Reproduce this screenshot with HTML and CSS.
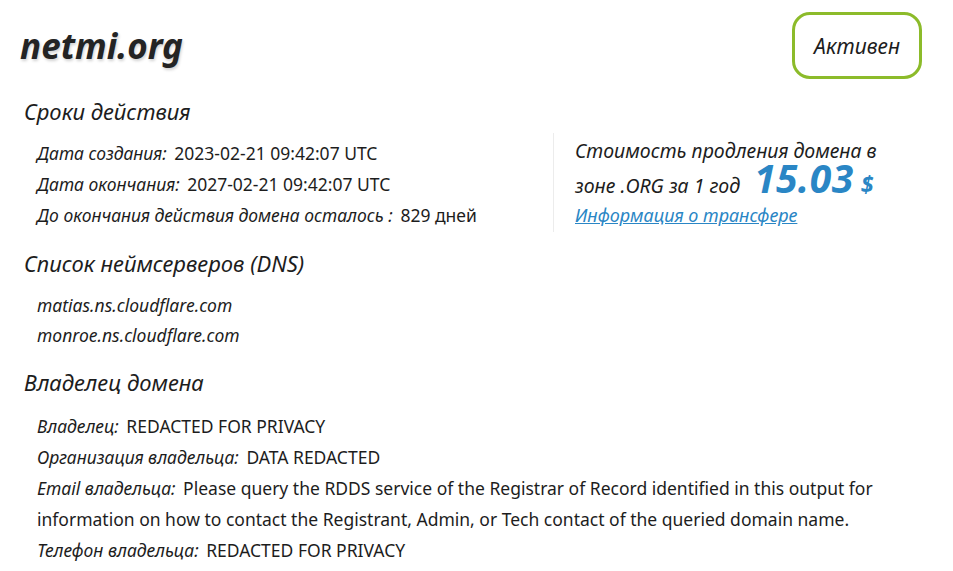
FILE: index.html
```html
<!DOCTYPE html>
<html lang="ru">
<head>
<meta charset="utf-8">
<title>netmi.org</title>
<link rel="stylesheet" href="styles.css">
</head>
<body>
<div class="page">
  <header class="head">
    <h1 class="domain">netmi.org</h1>
    <div class="status">Активен</div>
  </header>

  <section class="block b1">
    <h2 class="sec-title">Сроки действия</h2>
    <div class="dates">
      <div class="rows">
        <div class="row"><span class="lbl">Дата создания:</span> <span class="val">2023-02-21 09:42:07 UTC</span></div>
        <div class="row"><span class="lbl">Дата окончания:</span> <span class="val">2027-02-21 09:42:07 UTC</span></div>
        <div class="row"><span class="lbl">До окончания действия домена осталось :</span> <span class="val">829 дней</span></div>
      </div>
      <div class="price">
        <div class="price-text">Стоимость продления домена в зоне .ORG за 1 год <span class="amount">15.03</span> <span class="cur">$</span></div>
        <a class="transfer" href="#">Информация о трансфере</a>
      </div>
    </div>
  </section>

  <section class="block b2">
    <h2 class="sec-title">Список неймсерверов (DNS)</h2>
    <div class="ns">
      <div class="ns-row">matias.ns.cloudflare.com</div>
      <div class="ns-row">monroe.ns.cloudflare.com</div>
    </div>
  </section>

  <section class="block b3">
    <h2 class="sec-title">Владелец домена</h2>
    <div class="rows owner">
      <div class="row"><span class="lbl">Владелец:</span> <span class="val">REDACTED FOR PRIVACY</span></div>
      <div class="row"><span class="lbl">Организация владельца:</span> <span class="val">DATA REDACTED</span></div>
      <div class="row"><span class="lbl">Email владельца:</span> <span class="val">Please query the RDDS service of the Registrar of Record identified in this output for information on how to contact the Registrant, Admin, or Tech contact of the queried domain name.</span></div>
      <div class="row"><span class="lbl">Телефон владельца:</span> <span class="val">REDACTED FOR PRIVACY</span></div>
    </div>
  </section>
</div>
</body>
</html>
```
FILE: styles.css
```css
* { box-sizing: border-box; }
html, body { margin: 0; padding: 0; background: #fff; }
body {
  font-family: "Noto Sans", "Open Sans", sans-serif;
  color: #1d1d1d;
}
.page {
  width: 953px;
  padding: 12px 31px 0 20px;
}
.head {
  display: flex;
  justify-content: space-between;
  align-items: flex-start;
}
.domain {
  margin: 14px 0 0 0;
  font-size: 35px;
  line-height: 40px;
  font-style: italic;
  font-weight: 700;
  color: #242424;
  text-shadow: 1px 2px 3px rgba(0,0,0,0.18);
}
.status {
  width: 130px;
  height: 67px;
  border: 3px solid #8cbb2a;
  border-radius: 18px;
  display: flex;
  align-items: center;
  justify-content: center;
  font-style: italic;
  font-size: 21px;
  color: #1d1d1d;
}
.sec-title {
  margin: 0 0 0 4px;
  font-size: 22px;
  line-height: 30px;
  font-weight: 400;
  font-style: italic;
  color: #1d1d1d;
}
.b1 { margin-top: 17px; }
.b2 { margin-top: 16px; }
.b3 { margin-top: 17px; }
.dates {
  display: flex;
  align-items: flex-start;
  padding-top: 5px;
}
.rows { padding-left: 17px; }
.dates .rows { width: 533px; padding-top: 7px; }
.row {
  font-size: 17.5px;
  line-height: 31px;
}
.lbl { font-style: italic; margin-right: 3px; }
.val { font-style: normal; }
.price {
  border-left: 1px solid #ececec;
  margin-top: 2px;
  padding: 0 0 5px 21px;
  width: 349px;
}
.price-text {
  font-size: 19.5px;
  font-style: italic;
  line-height: 35px;
  color: #1d1d1d;
}
.amount {
  font-size: 39px;
  font-weight: 700;
  line-height: 20px;
  color: #2a86c5;
  margin-left: 9px;
  letter-spacing: 0.5px;
}
.cur {
  font-size: 23px;
  font-weight: 700;
  line-height: 20px;
  color: #2a86c5;
  margin-left: 2px;
}
.transfer {
  display: inline-block;
  font-size: 18px;
  font-style: italic;
  color: #2a86c5;
  text-decoration: underline;
  line-height: 24px;
}
.ns { padding: 12px 0 0 17px; }
.ns-row {
  font-size: 17.5px;
  font-style: italic;
  line-height: 30px;
}
.owner { padding-top: 14px; width: 880px; }
```
